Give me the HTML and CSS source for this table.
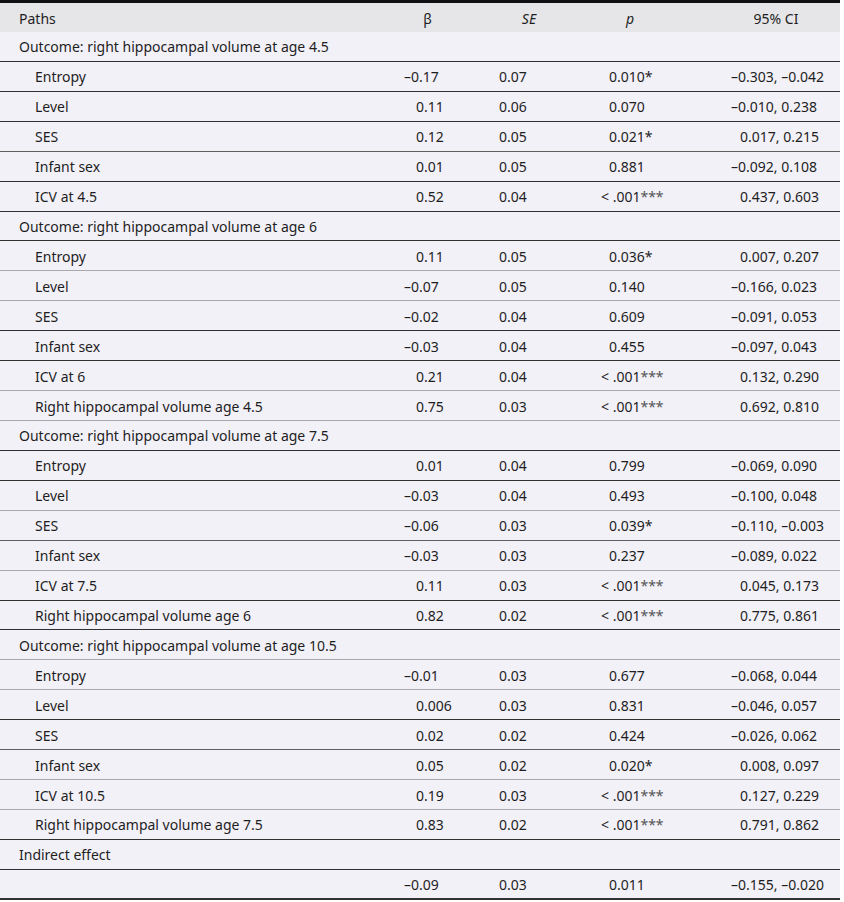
FILE: index.html
```html
<!DOCTYPE html>
<html>
<head>
<meta charset="utf-8">
<link rel="stylesheet" href="styles.css">
</head>
<body>
<div class="tbl">
  <div class="row head">
    <div class="c path">Paths</div>
    <div class="c hb">β</div>
    <div class="c hse"><i>SE</i></div>
    <div class="c hp"><i>p</i></div>
    <div class="c hci">95% CI</div>
  </div>

  <div class="row grp"><div class="c path">Outcome: right hippocampal volume at age 4.5</div></div>
  <div class="row"><div class="c sub">Entropy</div><div class="c b n">–0.17</div><div class="c se">0.07</div><div class="c p">0.010*</div><div class="c ci n">–0.303, –0.042</div></div>
  <div class="row"><div class="c sub">Level</div><div class="c b">0.11</div><div class="c se">0.06</div><div class="c p">0.070</div><div class="c ci n">–0.010, 0.238</div></div>
  <div class="row mid"><div class="c sub">SES</div><div class="c b">0.12</div><div class="c se">0.05</div><div class="c p">0.021*</div><div class="c ci">0.017, 0.215</div></div>
  <div class="row"><div class="c sub">Infant sex</div><div class="c b">0.01</div><div class="c se">0.05</div><div class="c p">0.881</div><div class="c ci n">–0.092, 0.108</div></div>
  <div class="row"><div class="c sub">ICV at 4.5</div><div class="c b">0.52</div><div class="c se">0.04</div><div class="c p lt">&lt; .001<span class="st">***</span></div><div class="c ci">0.437, 0.603</div></div>

  <div class="row grp"><div class="c path">Outcome: right hippocampal volume at age 6</div></div>
  <div class="row light"><div class="c sub">Entropy</div><div class="c b">0.11</div><div class="c se">0.05</div><div class="c p">0.036*</div><div class="c ci">0.007, 0.207</div></div>
  <div class="row light"><div class="c sub">Level</div><div class="c b n">–0.07</div><div class="c se">0.05</div><div class="c p">0.140</div><div class="c ci n">–0.166, 0.023</div></div>
  <div class="row"><div class="c sub">SES</div><div class="c b n">–0.02</div><div class="c se">0.04</div><div class="c p">0.609</div><div class="c ci n">–0.091, 0.053</div></div>
  <div class="row"><div class="c sub">Infant sex</div><div class="c b n">–0.03</div><div class="c se">0.04</div><div class="c p">0.455</div><div class="c ci n">–0.097, 0.043</div></div>
  <div class="row light"><div class="c sub">ICV at 6</div><div class="c b">0.21</div><div class="c se">0.04</div><div class="c p lt">&lt; .001<span class="st">***</span></div><div class="c ci">0.132, 0.290</div></div>
  <div class="row light"><div class="c sub">Right hippocampal volume age 4.5</div><div class="c b">0.75</div><div class="c se">0.03</div><div class="c p lt">&lt; .001<span class="st">***</span></div><div class="c ci">0.692, 0.810</div></div>

  <div class="row grp"><div class="c path">Outcome: right hippocampal volume at age 7.5</div></div>
  <div class="row"><div class="c sub">Entropy</div><div class="c b">0.01</div><div class="c se">0.04</div><div class="c p">0.799</div><div class="c ci n">–0.069, 0.090</div></div>
  <div class="row light"><div class="c sub">Level</div><div class="c b n">–0.03</div><div class="c se">0.04</div><div class="c p">0.493</div><div class="c ci n">–0.100, 0.048</div></div>
  <div class="row mid"><div class="c sub">SES</div><div class="c b n">–0.06</div><div class="c se">0.03</div><div class="c p">0.039*</div><div class="c ci n">–0.110, –0.003</div></div>
  <div class="row light"><div class="c sub">Infant sex</div><div class="c b n">–0.03</div><div class="c se">0.03</div><div class="c p">0.237</div><div class="c ci n">–0.089, 0.022</div></div>
  <div class="row"><div class="c sub">ICV at 7.5</div><div class="c b">0.11</div><div class="c se">0.03</div><div class="c p lt">&lt; .001<span class="st">***</span></div><div class="c ci">0.045, 0.173</div></div>
  <div class="row"><div class="c sub">Right hippocampal volume age 6</div><div class="c b">0.82</div><div class="c se">0.02</div><div class="c p lt">&lt; .001<span class="st">***</span></div><div class="c ci">0.775, 0.861</div></div>

  <div class="row grp light"><div class="c path">Outcome: right hippocampal volume at age 10.5</div></div>
  <div class="row light"><div class="c sub">Entropy</div><div class="c b n">–0.01</div><div class="c se">0.03</div><div class="c p">0.677</div><div class="c ci n">–0.068, 0.044</div></div>
  <div class="row"><div class="c sub">Level</div><div class="c b">0.006</div><div class="c se">0.03</div><div class="c p">0.831</div><div class="c ci n">–0.046, 0.057</div></div>
  <div class="row mid"><div class="c sub">SES</div><div class="c b">0.02</div><div class="c se">0.02</div><div class="c p">0.424</div><div class="c ci n">–0.026, 0.062</div></div>
  <div class="row light"><div class="c sub">Infant sex</div><div class="c b">0.05</div><div class="c se">0.02</div><div class="c p">0.020*</div><div class="c ci">0.008, 0.097</div></div>
  <div class="row light"><div class="c sub">ICV at 10.5</div><div class="c b">0.19</div><div class="c se">0.03</div><div class="c p lt">&lt; .001<span class="st">***</span></div><div class="c ci">0.127, 0.229</div></div>
  <div class="row"><div class="c sub">Right hippocampal volume age 7.5</div><div class="c b">0.83</div><div class="c se">0.02</div><div class="c p lt">&lt; .001<span class="st">***</span></div><div class="c ci">0.791, 0.862</div></div>

  <div class="row grp"><div class="c path">Indirect effect</div></div>
  <div class="row last"><div class="c sub"></div><div class="c b n">–0.09</div><div class="c se">0.03</div><div class="c p">0.011</div><div class="c ci n">–0.155, –0.020</div></div>
</div>
</body>
</html>
```

FILE: styles.css
```css
html, body {
  margin: 0;
  padding: 0;
  background: #ffffff;
}

.tbl {
  width: 840px;
  font-family: "Noto Sans", "Open Sans", sans-serif;
  font-size: 14px;
  color: #1e1e1e;
  background: #f3f1f8;
  border-top: 3px solid #111111;
}

.row {
  display: grid;
  grid-template-columns: 375px 105px 82px 136px 142px;
  height: 29.93px;
  box-sizing: border-box;
  border-bottom: 1px solid #303030;
  align-items: center;
  white-space: nowrap;
}

.row.light {
  border-bottom-color: #a9a9ab;
}

.row.mid {
  border-bottom-color: #606060;
}

.row.head {
  height: 29px;
  background: #e6e5e8;
  border-bottom: none;
}

.row.last {
  border-bottom: 2px solid #333333;
}

.c {
  line-height: 20px;
  padding-top: 2px;
}

.path {
  padding-left: 19px;
}

.sub {
  padding-left: 35px;
}

.hb,
.hse,
.hp,
.hci {
  text-align: center;
}

.hse {
  padding-left: 16px;
  box-sizing: border-box;
}

.hci {
  padding-left: 14px;
  box-sizing: border-box;
}

.b {
  padding-left: 41px;
}

.se {
  padding-left: 19px;
}

.p {
  padding-left: 47px;
}

.ci {
  padding-left: 42px;
}

.b.n {
  padding-left: 29px;
}

.ci.n {
  padding-left: 33px;
}

.p.lt {
  padding-left: 39px;
}

.st {
  color: #555555;
}
```
